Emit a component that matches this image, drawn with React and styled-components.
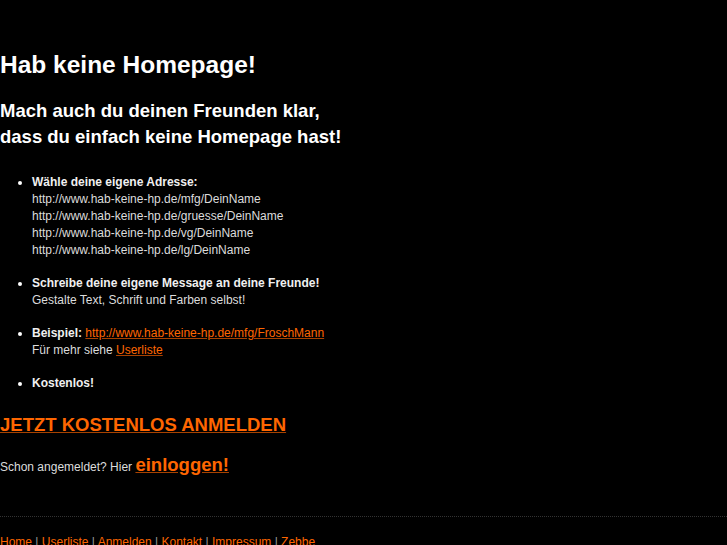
import React from "react";
import styled, { createGlobalStyle } from "styled-components";

const Global = createGlobalStyle`
  html, body { margin: 0; padding: 0; background: #000; }
  body { font-family: "Liberation Sans", Arial, sans-serif; color: #dcdcdc; font-size: 12px; }
`;

const Page = styled.div`
  padding-top: 50px;
`;

const Title = styled.h1`
  margin: 0;
  font-size: 24.5px;
  line-height: 30px;
  font-weight: bold;
  color: #fff;
`;

const Subtitle = styled.h2`
  margin: 18px 0 0;
  font-size: 18.5px;
  line-height: 26px;
  font-weight: bold;
  color: #fff;
`;

const List = styled.ul`
  margin: 24px 0 0;
  padding-left: 32px;
  list-style: disc;
  color: #dcdcdc;
`;

const Item = styled.li`
  line-height: 17px;
  margin-bottom: 16px;
  &::marker { color: #fff; }
  &:last-child { margin-bottom: 0; }
`;

const Strong = styled.strong`
  color: #f0f0f0;
`;

const Link = styled.a`
  color: #ff6600;
  text-decoration: underline;
  text-decoration-color: #a84200;
`;

const SignUp = styled(Link)`
  display: inline-block;
  margin-top: 22px;
  font-size: 18.5px;
  line-height: 22px;
  font-weight: bold;
`;

const LoginRow = styled.div`
  margin-top: 17px;
  line-height: 24px;
  color: #dcdcdc;
`;

const LoginLink = styled(Link)`
  font-size: 18.5px;
  font-weight: bold;
`;

const Divider = styled.hr`
  margin: 37px 0 0;
  border: 0;
  border-top: 1px dotted #333;
  height: 0;
`;

const Footer = styled.div`
  margin-top: 17px;
  line-height: 16px;
  color: #999;
`;

const FooterLink = styled.a`
  color: #ff6600;
  text-decoration: underline;
  text-decoration-color: #a84200;
`;

const footerLinks = ["Home", "Userliste", "Anmelden", "Kontakt", "Impressum", "Zebbe"];

export default function App() {
  return (
    <Page>
      <Global />
      <Title>Hab keine Homepage!</Title>
      <Subtitle>
        Mach auch du deinen Freunden klar,
        <br />
        dass du einfach keine Homepage hast!
      </Subtitle>
      <List>
        <Item>
          <Strong>Wähle deine eigene Adresse:</Strong>
          <br />
          http://www.hab-keine-hp.de/mfg/DeinName
          <br />
          http://www.hab-keine-hp.de/gruesse/DeinName
          <br />
          http://www.hab-keine-hp.de/vg/DeinName
          <br />
          http://www.hab-keine-hp.de/lg/DeinName
        </Item>
        <Item>
          <Strong>Schreibe deine eigene Message an deine Freunde!</Strong>
          <br />
          Gestalte Text, Schrift und Farben selbst!
        </Item>
        <Item>
          <Strong>Beispiel:</Strong>{" "}
          <Link href="#">http://www.hab-keine-hp.de/mfg/FroschMann</Link>
          <br />
          Für mehr siehe <Link href="#">Userliste</Link>
        </Item>
        <Item>
          <Strong>Kostenlos!</Strong>
        </Item>
      </List>
      <SignUp href="#">JETZT KOSTENLOS ANMELDEN</SignUp>
      <LoginRow>
        Schon angemeldet? Hier <LoginLink href="#">einloggen!</LoginLink>
      </LoginRow>
      <Divider />
      <Footer>
        {footerLinks.map((l, i) => (
          <React.Fragment key={l}>
            {i > 0 && " | "}
            <FooterLink href="#">{l}</FooterLink>
          </React.Fragment>
        ))}
      </Footer>
    </Page>
  );
}
